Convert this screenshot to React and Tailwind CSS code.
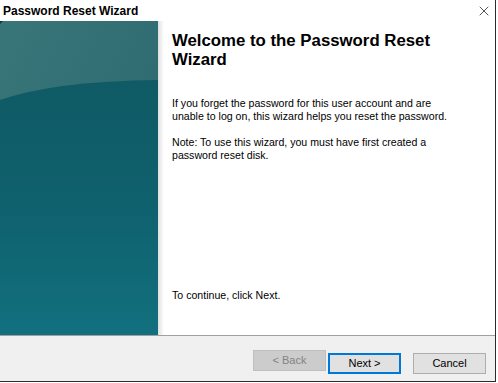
import { X } from 'lucide-react';

const SidePanel = () => (
  <svg width="158" height="314" viewBox="0 0 158 314" className="block shrink-0">
    <defs>
      <linearGradient id="topWash" x1="0" y1="0" x2="1" y2="1">
        <stop offset="0" stopColor="#38767a" />
        <stop offset="1" stopColor="#2a666c" />
      </linearGradient>
      <linearGradient id="lowWash" x1="0" y1="0" x2="0" y2="1">
        <stop offset="0" stopColor="#0f5a65" />
        <stop offset="0.5" stopColor="#0f616e" />
        <stop offset="1" stopColor="#12707e" />
      </linearGradient>
    </defs>
    <rect width="158" height="314" fill="url(#topWash)" />
    <path d="M0 79 Q55 60 158 59 L158 314 L0 314 Z" fill="url(#lowWash)" />
    <path d="M0 0 L3 0 L0 3 Z" fill="#1d2f30" />
  </svg>
);

const Button = ({ children, disabled, primary }) => (
  <button
    className={
      disabled
        ? 'w-[73px] h-[21px] border border-[#bfbfbf] bg-[#cccccc] text-[#838383] text-[11px]'
        : primary
        ? 'w-[73px] h-[21px] border-2 border-[#0078d7] bg-[#e1e1e1] text-black text-[11px]'
        : 'w-[73px] h-[21px] border border-[#adadad] bg-[#e1e1e1] text-black text-[11px]'
    }
  >
    {children}
  </button>
);

export default function App() {
  return (
    <div className="w-[498px] h-[383px] bg-white" style={{ fontFamily: '"Liberation Sans", Arial, sans-serif' }}>
      <div className="w-[496px] h-[382px] flex flex-col border-r border-b border-[#2b2b2b] bg-white">

        {/* title bar */}
        <div className="h-[21px] flex items-center justify-between pl-[3px] pr-[3px]">
          <span className="text-[12px] font-bold text-black leading-none">Password Reset Wizard</span>
          <X size={16} strokeWidth={1} className="text-black" />
        </div>

        {/* body */}
        <div className="h-[314px] flex">
          <SidePanel />
          <div className="w-[6px] bg-gradient-to-r from-[#e0e0e0] to-white" />
          <div className="flex-1 flex flex-col pl-[8px] pt-[10px] pb-[33px] text-black">
            <h1 className="text-[16.8px] font-bold leading-[19px]">
              Welcome to the Password Reset<br />Wizard
            </h1>
            <p className="mt-[28px] text-[10.6px] leading-[13px]">
              If you forget the password for this user account and are<br />
              unable to log on, this wizard helps you reset the password.
            </p>
            <p className="mt-[13px] text-[10.6px] leading-[13px]">
              Note: To use this wizard, you must have first created a<br />
              password reset disk.
            </p>
            <p className="mt-auto text-[10.6px] leading-[13px]">To continue, click Next.</p>
          </div>
        </div>

        {/* footer */}
        <div className="flex-1 border-t border-[#a0a0a0] bg-[#f0f0f0] flex justify-end items-start pt-[14px] pr-[9px]">
          <div className="flex">
            <Button disabled>&lt; Back</Button>
            <div className="ml-[2px]"><Button primary>Next &gt;</Button></div>
            <div className="ml-[12px]"><Button>Cancel</Button></div>
          </div>
        </div>
      </div>
    </div>
  );
}
